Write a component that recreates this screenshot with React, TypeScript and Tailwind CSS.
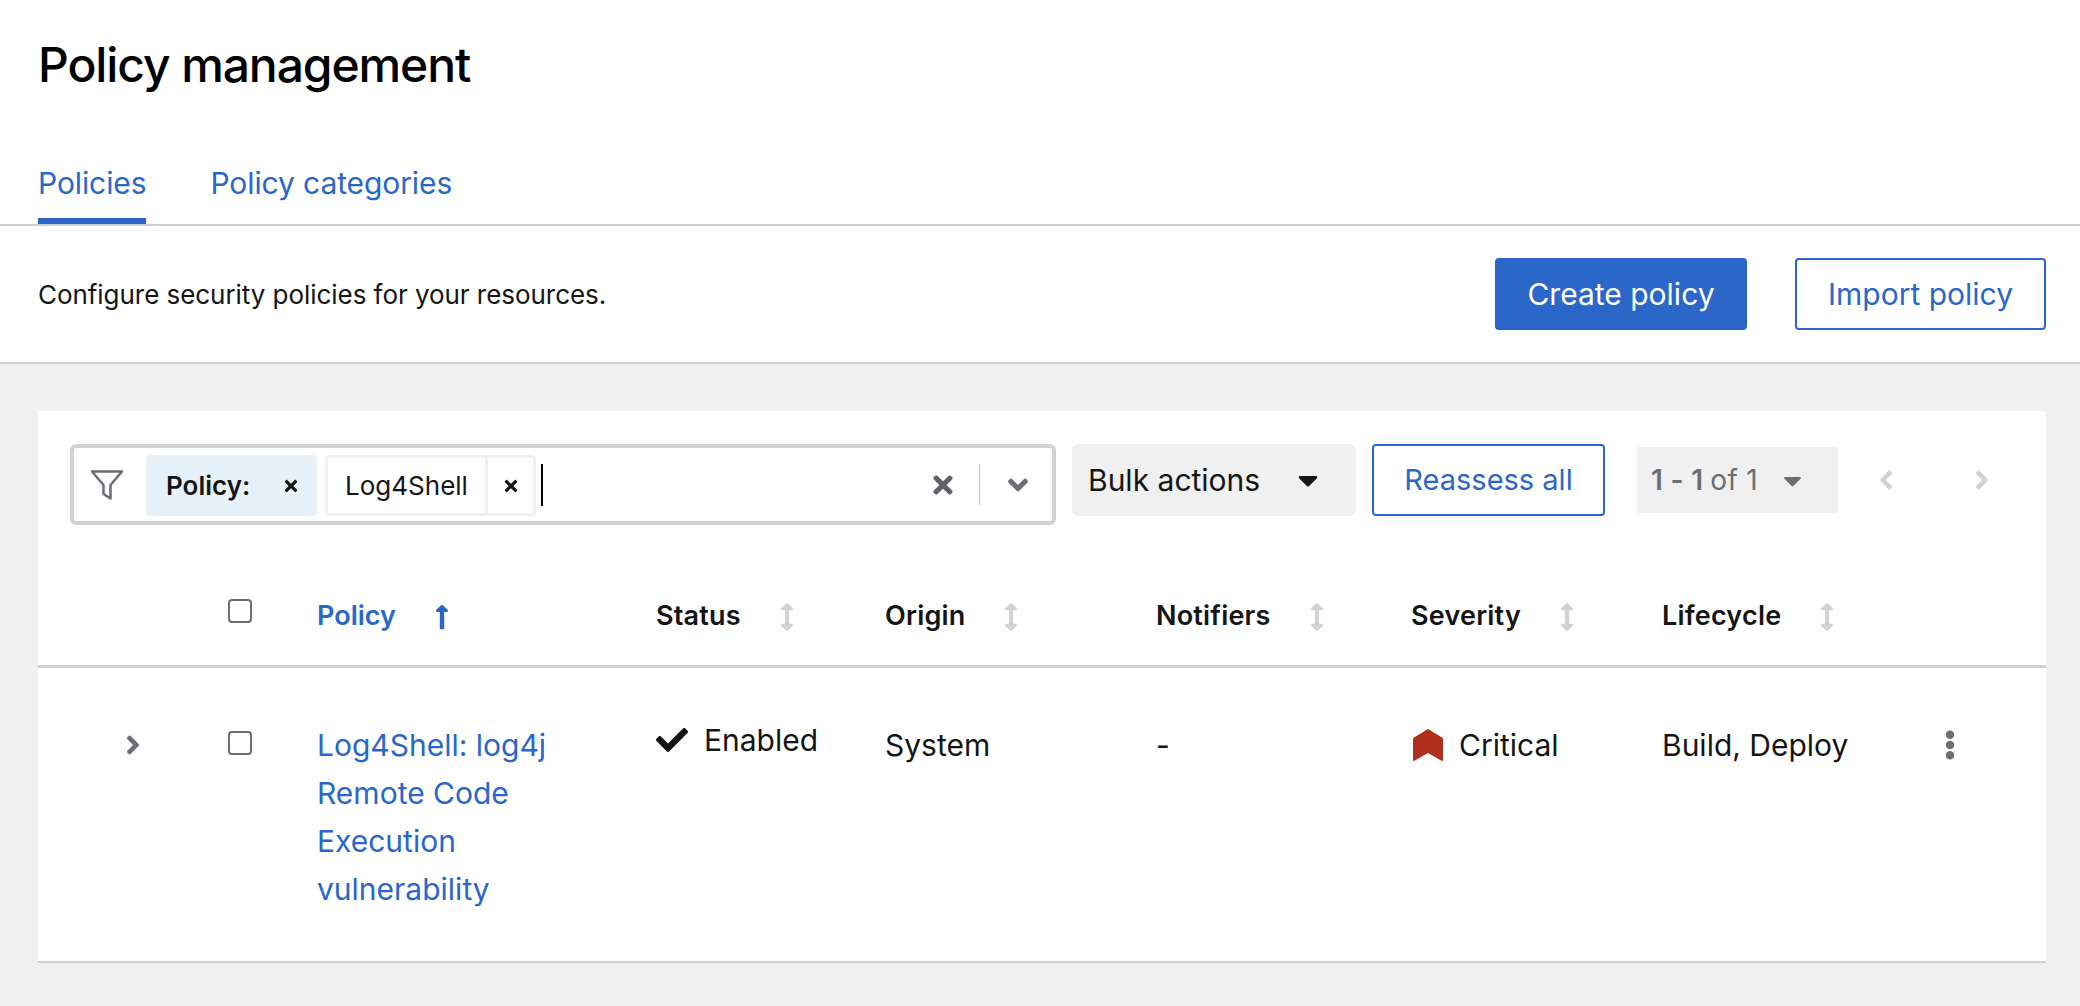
import {
  FaAngleDown,
  FaAngleLeft,
  FaAngleRight,
  FaArrowsAltV,
  FaCaretDown,
  FaCheck,
  FaEllipsisV,
  FaLongArrowAltUp,
  FaTimes,
} from "react-icons/fa";

const font = "font-['Inter','Liberation_Sans',sans-serif]";

function FilterIcon() {
  return (
    <svg width="34" height="34" viewBox="0 0 34 34" fill="none" stroke="#6a6e73" strokeWidth="2.5" strokeLinejoin="round">
      <path d="M2 3.500h30L20.500 17v13.500l-7-4.500v-9z" />
    </svg>
  );
}

function CriticalIcon() {
  return (
    <svg width="30" height="32" viewBox="0 0 30 32" fill="#b1301c">
      <path d="M15 0l14 8.500c.6.4 1 1 1 1.800V31c0 .8-.9 1.200-1.500.8L15 24 1.500 31.800C.9 32.200 0 31.800 0 31V10.300c0-.8.4-1.400 1-1.800z" />
    </svg>
  );
}

function SortHeader({ label }: { label: string }) {
  return (
    <div className="flex items-center text-[27px] font-semibold tracking-[0.2px] text-[#151515]">
      <span>{label}</span>
      <FaArrowsAltV className="ml-[32px] text-[#d2d2d2]" size={28} />
    </div>
  );
}

function Checkbox() {
  return <span className="block h-[24px] w-[24px] rounded-[4px] border-2 border-[#6a6e73] bg-white" />;
}

export default function App() {
  return (
    <div className={`${font} flex min-h-[1006px] flex-col bg-[#f0f0f0] text-[#151515]`}>
      <header className="bg-white">
        <h1 className="px-[38px] pt-[36px] text-[48px] leading-[58px] font-medium tracking-[-1.1px] text-black">
          Policy management
        </h1>
        <nav className="mt-[69px] flex gap-[64px] border-b-2 border-[#d2d2d2] px-[38px] text-[30px] leading-[40px] tracking-[-0.1px] text-[#2b66c9]">
          <a className="border-b-[6px] border-[#2b66c9] pb-[15px]">Policies</a>
          <a>Policy categories</a>
        </nav>
        <div className="flex h-[138px] items-center justify-between border-b-2 border-[#d2d2d2] pr-[34px] pl-[38px]">
          <p className="text-[26px] tracking-[-0.05px] text-[#151515]">Configure security policies for your resources.</p>
          <div className="flex gap-[48px] text-[30px]">
            <button className="h-[72px] w-[252px] rounded-[4px] bg-[#2b66c9] text-white">Create policy</button>
            <button className="h-[72px] w-[251px] rounded-[4px] border-2 border-[#2b66c9] text-[#2b66c9]">Import policy</button>
          </div>
        </div>
      </header>

      <main className="pt-[47px] pr-[34px] pl-[38px]">
        <section className="h-[552px] border-b-2 border-[#d2d2d2] bg-white">
          <div className="flex items-start px-[32px] pt-[33px]">
            <div className="flex h-[81px] w-[986px] items-center rounded-[6px] border-4 border-[#d2d2d2] pr-[18px] pl-[16px]">
              <FilterIcon />
              <div className="mt-[2px] ml-[22px] flex h-[61px] w-[171px] items-center rounded-[4px] bg-[#e7f1fa]">
                <span className="ml-[20px] text-[26px] font-semibold">Policy:</span>
                <FaTimes className="ml-[32px] text-[#151515]" size={18} />
              </div>
              <div className="mt-[2px] ml-[8px] flex h-[61px] w-[211px] rounded-[4px] border-[3px] border-[#f0f0f0]">
                <span className="flex w-[160px] items-center justify-center border-r-[3px] border-[#f0f0f0] text-[26px]">Log4Shell</span>
                <span className="flex flex-1 items-center justify-center">
                  <FaTimes size={18} />
                </span>
              </div>
              <span className="ml-[5px] h-[42px] w-[2px] bg-black" />
              <div className="ml-auto flex items-center">
                <FaTimes className="text-[#5f6368]" size={28} />
                <span className="mx-[22px] h-[41px] w-[1px] bg-[#c7c7c7]" />
                <FaAngleDown className="text-[#6a6e73]" size={32} />
              </div>
            </div>
            <button className="ml-[16px] flex h-[72px] w-[284px] items-center rounded-[6px] bg-[#f0f0f0] pl-[16px] text-[30px]">
              Bulk actions
              <FaCaretDown className="ml-[32px]" size={32} />
            </button>
            <button className="ml-[16px] h-[72px] w-[233px] rounded-[4px] border-2 border-[#2b66c9] text-[29px] text-[#2b66c9]">
              Reassess all
            </button>
            <div className="mt-[3px] ml-[32px] flex h-[66px] w-[201px] items-center bg-[#f0f0f0] pl-[14px] text-[28px] tracking-[0.3px] whitespace-nowrap text-[#6a6e73]">
              <span className="font-semibold">1 - 1</span>
              <span className="ml-[7px]">of 1</span>
              <FaCaretDown className="ml-[20px]" size={29} />
            </div>
            <div className="mt-[3px] ml-[33px] flex h-[66px] items-center gap-[66px] text-[#d2d2d2]">
              <FaAngleLeft size={30} />
              <FaAngleRight size={30} />
            </div>
          </div>

          <div className="mt-[47px] grid h-[96px] grid-cols-[190px_89px_339px_229px_271px_255px_251px_1fr] items-center border-b-[3px] border-[#d2d2d2] pb-[4px]">
            <span />
            <span className="-mt-[11px]">
              <Checkbox />
            </span>
            <div className="flex items-center text-[27px] font-semibold text-[#2b66c9]">
              <span>Policy</span>
              <FaLongArrowAltUp className="ml-[32px]" size={28} />
            </div>
            <SortHeader label="Status" />
            <SortHeader label="Origin" />
            <SortHeader label="Notifiers" />
            <SortHeader label="Severity" />
            <SortHeader label="Lifecycle" />
          </div>

          <div className="grid grid-cols-[190px_89px_339px_229px_271px_255px_251px_273px_1fr] items-start pt-[59px] text-[30px] leading-[48px]">
            <span className="flex h-[36px] items-center pl-[80px] text-[#6a6e73]">
              <FaAngleRight size={30} />
            </span>
            <span className="pt-[4px]">
              <Checkbox />
            </span>
            <a className="-mt-[6px] w-[270px] text-[#2b66c9]">Log4Shell: log4j Remote Code Execution vulnerability</a>
            <div className="-mt-[11px] flex items-center gap-[16px]">
              <FaCheck size={32} />
              <span>Enabled</span>
            </div>
            <span className="-mt-[6px]">System</span>
            <span className="-mt-[6px]">-</span>
            <div className="-mt-[6px] ml-[2px] flex items-center gap-[16px]">
              <CriticalIcon />
              <span>Critical</span>
            </div>
            <span className="-mt-[6px] whitespace-nowrap">Build, Deploy</span>
            <span className="flex h-[36px] items-center text-[#6a6e73]">
              <FaEllipsisV size={30} />
            </span>
          </div>
        </section>
      </main>
    </div>
  );
}
